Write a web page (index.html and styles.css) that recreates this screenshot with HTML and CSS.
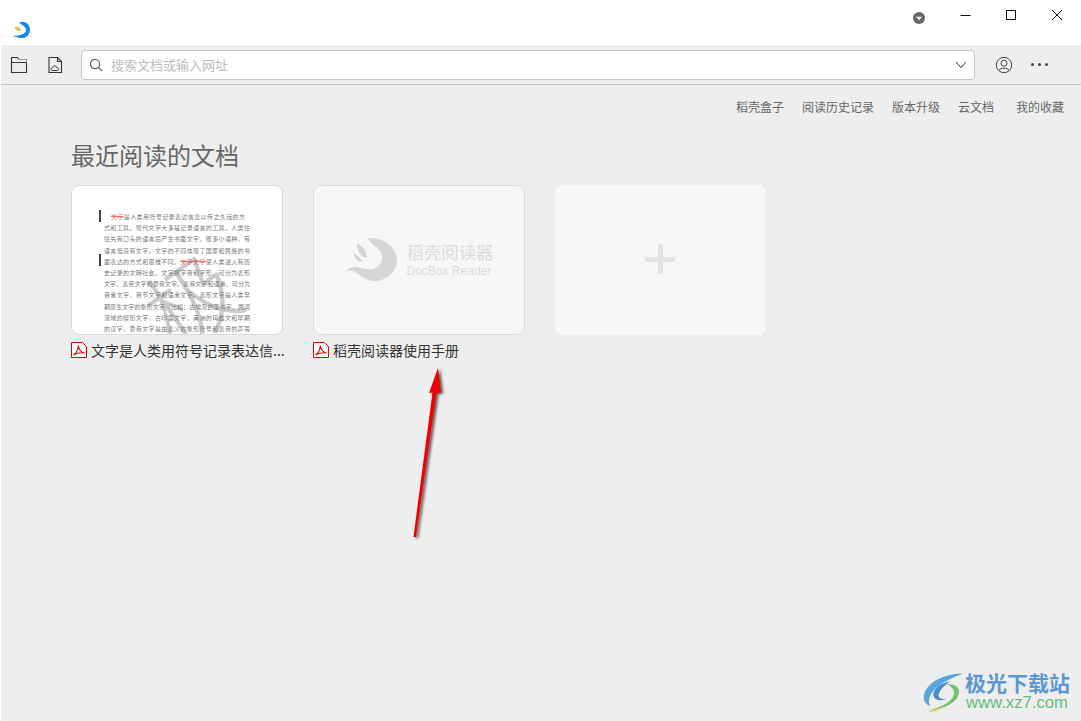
FILE: index.html
```html
<!DOCTYPE html>
<html lang="zh-CN">
<head>
    <meta charset="UTF-8">
    <title>稻壳阅读器</title>
    <link rel="stylesheet" href="styles.css">
</head>
<body>
    <header class="titleBar">
        <svg class="appLogo" width="20" height="20" viewBox="0 0 20 20">
            <path d="M8 3 C12 0 19 3 19 10 C19 15 15 18.5 10 18 C7 17.8 4 16.5 1 16 C4 15.8 7 15.8 10 14.8 C13 14 15 12 15 10 C15 7.5 12 5 8 3 Z" fill="#1a87f0"/>
            <path d="M3.5 8 C5 5.5 8 6 10.5 10 C8 12.5 5 11 3.5 8 Z" fill="#edc05e"/>
        </svg>
        <div class="windowBtns">
            <svg class="dropBadge" width="12" height="12" viewBox="0 0 12 12">
                <circle cx="6" cy="6" r="6" fill="#666"/>
                <path d="M3 4.8 H9 L6 8.6 Z" fill="#fff"/>
            </svg>
            <svg class="winIcon" width="12" height="12" viewBox="0 0 12 12">
                <path d="M1.5 6.5 H11.5" stroke="#111" fill="none"/>
            </svg>
            <svg class="winIcon" width="12" height="12" viewBox="0 0 12 12">
                <rect x="1.5" y="1.5" width="9" height="9" stroke="#111" fill="none"/>
            </svg>
            <svg class="winIcon" width="12" height="12" viewBox="0 0 12 12">
                <path d="M1 1 L11 11 M11 1 L1 11" stroke="#111" fill="none"/>
            </svg>
        </div>
    </header>

    <nav class="toolBar">
        <svg class="toolIcon" width="18" height="18" viewBox="0 0 18 18">
            <path d="M1.5 6.5 V1.5 H7.5 L9 3.5 M1.5 6.5 H16.5 V16.5 H1.5 V6.5" stroke="#333" stroke-width="1.1" fill="none"/>
            <path d="M9 3.5 H16.5 V6.5" stroke="#999" stroke-width="1.1" fill="none"/>
        </svg>
        <svg class="toolIcon" width="18" height="18" viewBox="0 0 18 18">
            <path d="M3 1.5 H11.5 L15.5 5.5 V16.5 H3 Z M11.5 1.5 V5.5 H15.5" stroke="#333" stroke-width="1.1" fill="none"/>
            <path d="M6.5 14.5 C4.6 14.5 4.6 11.8 6.6 11.6 C7 9.4 10.4 9.4 10.8 11.4 C13 11.4 13 14.5 11 14.5 Z" stroke="#333" stroke-width="1" fill="none"/>
        </svg>
        <div class="searchBox">
            <svg width="14" height="14" viewBox="0 0 14 14">
                <circle cx="6" cy="6" r="4.6" stroke="#666" stroke-width="1.2" fill="none"/>
                <path d="M9.5 9.5 L13 13" stroke="#666" stroke-width="1.2"/>
            </svg>
            <span class="searchHint">搜索文档或输入网址</span>
            <svg class="searchArrow" width="12" height="8" viewBox="0 0 12 8">
                <path d="M1 1 L6 6.5 L11 1" stroke="#555" stroke-width="1.1" fill="none"/>
            </svg>
        </div>
        <svg class="userIcon" width="18" height="18" viewBox="0 0 18 18">
            <circle cx="9" cy="9" r="7.7" stroke="#444" fill="none"/>
            <circle cx="9" cy="7.2" r="3" stroke="#444" fill="none"/>
            <path d="M3.8 14.5 C5 11.5 13 11.5 14.2 14.5" stroke="#444" fill="none"/>
        </svg>
        <div class="moreDots"><i></i><i></i><i></i></div>
    </nav>

    <main class="content">
        <div class="linkRow">
            <a>稻壳盒子</a>
            <a>阅读历史记录</a>
            <a>版本升级</a>
            <a>云文档</a>
            <a>我的收藏</a>
        </div>

        <h1 class="sectionTitle">最近阅读的文档</h1>

        <div class="docGrid">
            <div class="docItem">
                <div class="docCard">
                    <div class="docPage">
                        <p class="first"><span class="mark">文字</span>是人类用符号记录表达信息以传之久远的方</p>
                        <p>式和工具。现代文字大多是记录语言的工具。人类往</p>
                        <p>往先有口头的语言后产生书面文字，很多小语种，有</p>
                        <p>语言但没有文字。文字的不同体现了国家和民族的书</p>
                        <p>面表达的方式和思维不同。<span class="mark">文字文字</span>使人类进入有历</p>
                        <p>史记录的文明社会。文字按字音和字形，可分为表形</p>
                        <p>文字、表音文字和意音文字。表音文字和语素，可分为</p>
                        <p>音素文字、音节文字和语素文字。表形文字是人类早</p>
                        <p>期原生文字的象形文字（比如：古埃及的圣书字，两河</p>
                        <p>流域的楔形文字，古印度文字，美洲的玛雅文和早期</p>
                        <p>的汉字。意音文字是由表义的象形符号和表音的声旁</p>
                    </div>
                    <i class="caret caretOne"></i>
                    <i class="caret caretTwo"></i>
                    <span class="stamp">极</span>
                </div>
                <div class="docName">
                    <svg class="pdfIcon" width="16" height="16" viewBox="0 0 16 16">
                        <path d="M0.5 0.5 H11.5 L15.5 4.5 V15.5 H0.5 Z" stroke="#e00000" fill="#fff"/>
                        <path d="M2.5 13 C5 11.5 7 7.5 7.3 3.5 C8 7.5 10 10.5 13.5 11 C10 10.5 6 11 2.5 13 Z" stroke="#e00000" stroke-width="1.1" fill="none"/>
                    </svg>
                    <span class="docTitle">文字是人类用符号记录表达信...</span>
                </div>
            </div>

            <div class="docItem">
                <div class="docCard blankCard">
                    <svg width="52" height="44" viewBox="0 0 56 44" preserveAspectRatio="none">
                        <path d="M24 0 C40 -1 56 8 56 22 C56 36 41 44 30 43 C21 42 15 35 8 33 C5 32 2 33 0 34 C4 29 11 28 18 30 C26 33 35 31 39 24 C42 18 38 11 33 9 C30 7 27 4 24 0 Z" fill="#d6d6d6"/>
                        <path d="M13 6 C20 8 24 14 23 20 C17 19 12 13 13 6 Z M9 15 C13 17 17 20 19 24 C14 24 10 20 9 15 Z" fill="#d6d6d6"/>
                    </svg>
                    <div class="brandText">
                        <span class="brandCn">稻壳阅读器</span>
                        <span class="brandEn">DocBox Reader</span>
                    </div>
                </div>
                <div class="docName">
                    <svg class="pdfIcon" width="16" height="16" viewBox="0 0 16 16">
                        <path d="M0.5 0.5 H11.5 L15.5 4.5 V15.5 H0.5 Z" stroke="#e00000" fill="#fff"/>
                        <path d="M2.5 13 C5 11.5 7 7.5 7.3 3.5 C8 7.5 10 10.5 13.5 11 C10 10.5 6 11 2.5 13 Z" stroke="#e00000" stroke-width="1.1" fill="none"/>
                    </svg>
                    <span class="docTitle">稻壳阅读器使用手册</span>
                </div>
            </div>

            <div class="docItem">
                <div class="docCard addCard">
                    <i class="plusH"></i>
                    <i class="plusV"></i>
                </div>
            </div>
        </div>
    </main>

    <svg class="redArrow" width="60" height="190" viewBox="400 360 60 190">
        <defs>
            <filter id="arrowShadow" x="-50%" y="-20%" width="200%" height="140%">
                <feDropShadow dx="2" dy="1" stdDeviation="1.8" flood-color="#000" flood-opacity="0.7"/>
            </filter>
        </defs>
        <path d="M438 368 L441 393 L436.5 392.5 L416 537 L413.5 537 L432.5 392.5 L429 393 Z" fill="#f00000" filter="url(#arrowShadow)"/>
    </svg>

    <div class="siteMark">
        <svg width="44" height="44" viewBox="0 0 44 46">
            <path d="M43 4 C28 3 9 10 3 23 C0 30 3 36 9 38 C5 33 8 24 17 17 C25 11 34 7 43 4 Z" fill="#5aa6dc"/>
            <path d="M30 12 C20 13 11 20 12 27 C13 32 20 33 25 30 C19 31 16 28 18 24 C20 19 25 15 30 12 Z" fill="#4a8ccb"/>
            <path d="M26 15 C38 14 42 22 36 30 C30 38 16 42 7 43 C18 39 30 35 33 27 C35 22 32 18 26 15 Z" fill="#6cc46c"/>
            <path d="M7 43 C12 42 18 40 24 38 C19 42 12 45 7 43 Z" fill="#e7d564"/>
        </svg>
        <div class="siteText">
            <span class="siteCn">极光下载站</span>
            <span class="siteUrl">www.xz7.com</span>
        </div>
    </div>
</body>
</html>
```

FILE: styles.css
```css
* {
    box-sizing: border-box;
}

html, body {
    height: 100%;
}

body {
    margin: 0;
    overflow: hidden;
    background-color: #eeeeee;
    border-left: 1px solid #fff;
    font-family: "Noto Sans CJK SC", "Liberation Sans", sans-serif;
}

.titleBar {
    height: 45px;
    background-color: #fff;
    display: flex;
    align-items: flex-start;
    justify-content: space-between;
}

.appLogo {
    margin: 20px 0 0 10px;
}

.windowBtns {
    display: flex;
    align-items: flex-start;
    padding: 9px 18px 0 0;
}

.dropBadge {
    margin: 3px 0 0 0;
}

.winIcon {
    margin-left: 34px;
}

.toolBar {
    height: 40px;
    border-bottom: 1px solid #c8c8c8;
    display: flex;
    align-items: center;
    padding: 0 0 0 9px;
}

.toolIcon {
    margin-right: 18px;
}

.toolIcon + .searchBox {
    margin-left: -1px;
}

.searchBox {
    width: 894px;
    height: 30px;
    background-color: #fff;
    border: 1px solid #c6c6c6;
    border-radius: 4px;
    display: flex;
    align-items: center;
    padding: 0 7px 0 7px;
}

.searchHint {
    margin-left: 8px;
    flex: 1;
    font-size: 13px;
    color: #bdbdbd;
}

.userIcon {
    margin-left: 20px;
}

.moreDots {
    display: flex;
    gap: 4px;
    margin-left: 18px;
}

.moreDots i {
    width: 3px;
    height: 3px;
    border-radius: 50%;
    background-color: #444;
}

.content {
    padding: 0 17px 0 70px;
}

.linkRow {
    display: flex;
    justify-content: flex-end;
    gap: 18px;
    padding-top: 13px;
    line-height: 18px;
}

.linkRow a {
    font-size: 12px;
    color: #666;
}

.linkRow a:last-child {
    margin-left: 4px;
}

.sectionTitle {
    margin: 21px 0 0;
    font-size: 24px;
    font-weight: 400;
    line-height: 36px;
    color: #666;
}

.docGrid {
    display: flex;
    gap: 30px;
    margin-top: 12px;
}

.docItem {
    width: 212px;
}

.docCard {
    position: relative;
    height: 150px;
    overflow: hidden;
    border: 1px solid #dcdcdc;
    border-radius: 8px;
    background-color: #fff;
}

.docPage {
    padding: 25px 0 0 32px;
    width: 178px;
}

.docPage p {
    margin: 0;
    height: 11.2px;
    font-size: 6px;
    line-height: 11.2px;
    color: #777;
    white-space: nowrap;
    text-align: justify;
    text-align-last: justify;
}

.docPage .first {
    padding: 0 5px 0 7px;
}

.mark {
    color: #f56a6a;
    text-decoration: line-through;
}

.caret {
    position: absolute;
    left: 27px;
    width: 2px;
    height: 12px;
    background-color: #444;
}

.caretOne {
    top: 24px;
}

.caretTwo {
    top: 68px;
}

.stamp {
    position: absolute;
    left: 72px;
    top: 66px;
    font-size: 90px;
    font-weight: 300;
    line-height: 90px;
    color: rgba(130, 130, 130, 0.42);
    transform: rotate(-35deg);
}

.blankCard {
    background-color: #f7f7f7;
    display: flex;
    align-items: center;
    justify-content: center;
    gap: 10px;
}

.brandText {
    display: flex;
    flex-direction: column;
    color: #dcdcdc;
}

.brandCn {
    font-size: 17.4px;
    line-height: 22px;
}

.brandEn {
    font-family: "Liberation Sans", sans-serif;
    font-size: 12px;
    line-height: 16px;
}

.addCard {
    width: 211px;
    border: none;
    background-color: #f7f7f7;
}

.plusH, .plusV {
    position: absolute;
    background-color: #e4e4e4;
}

.plusH {
    left: 90px;
    top: 72px;
    width: 30px;
    height: 5px;
}

.plusV {
    left: 103px;
    top: 59px;
    width: 5px;
    height: 30px;
}

.docName {
    display: flex;
    align-items: center;
    gap: 4px;
    margin-top: 7px;
    height: 16px;
}

.pdfIcon {
    flex: none;
}

.docTitle {
    font-size: 14px;
    color: #333;
    white-space: nowrap;
}

/* annotation and site stamp lie over the app */
.redArrow {
    position: absolute;
    left: 400px;
    top: 360px;
}

.siteMark {
    position: absolute;
    left: 921px;
    top: 670px;
    display: flex;
    align-items: flex-start;
}

.siteText {
    display: flex;
    flex-direction: column;
}

.siteCn {
    font-size: 21px;
    line-height: 24px;
    font-weight: 700;
    color: #5b97d2;
}

.siteUrl {
    font-family: "Liberation Sans", sans-serif;
    font-size: 16.7px;
    line-height: 18px;
    padding-left: 1px;
    color: #62bd7a;
}
```
